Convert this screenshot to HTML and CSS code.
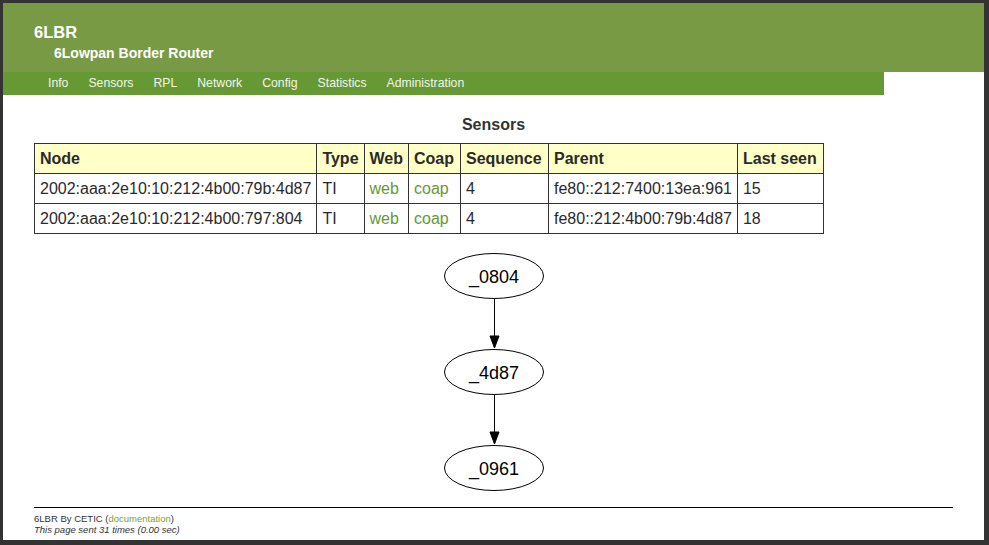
FILE: index.html
```html
<!DOCTYPE html>
<html>
<head>
<meta charset="utf-8">
<title>6LBR</title>
<link rel="stylesheet" href="styles.css">
</head>
<body>
<div class="page">
  <div class="banner">
    <div class="title">6LBR</div>
    <div class="subtitle">6Lowpan Border Router</div>
  </div>
  <div class="menu">
    <a href="#">Info</a>
    <a href="#">Sensors</a>
    <a href="#">RPL</a>
    <a href="#">Network</a>
    <a href="#">Config</a>
    <a href="#">Statistics</a>
    <a href="#">Administration</a>
  </div>
  <div class="content">
    <h2 class="heading">Sensors</h2>
    <table class="sensors">
      <tr>
        <th>Node</th><th>Type</th><th>Web</th><th class="col-coap">Coap</th><th class="col-seq">Sequence</th><th class="col-parent">Parent</th><th class="col-seen">Last seen</th>
      </tr>
      <tr>
        <td>2002:aaa:2e10:10:212:4b00:79b:4d87</td><td>TI</td><td><a href="#">web</a></td><td><a href="#">coap</a></td><td>4</td><td>fe80::212:7400:13ea:961</td><td>15</td>
      </tr>
      <tr>
        <td>2002:aaa:2e10:10:212:4b00:797:804</td><td>TI</td><td><a href="#">web</a></td><td><a href="#">coap</a></td><td>4</td><td>fe80::212:4b00:79b:4d87</td><td>18</td>
      </tr>
    </table>
    <svg class="graph" width="104" height="246" viewBox="0 0 104 246">
      <g fill="none" stroke="#000" stroke-width="1">
        <ellipse cx="52" cy="26" rx="49.5" ry="22.5"/>
        <ellipse cx="52" cy="122" rx="49.5" ry="22.5"/>
        <ellipse cx="52" cy="218" rx="49.5" ry="22.5"/>
        <line x1="52.5" y1="49" x2="52.5" y2="86"/>
        <line x1="52.5" y1="145" x2="52.5" y2="182"/>
      </g>
      <g fill="#000" stroke="#000" stroke-width="1">
        <polygon points="48,86 57,86 52.5,98"/>
        <polygon points="48,182 57,182 52.5,194"/>
      </g>
      <g font-family="'Liberation Sans', Arial, sans-serif" font-size="18" text-anchor="middle" fill="#000">
        <text x="52" y="32.5">_0804</text>
        <text x="52" y="128.5">_4d87</text>
        <text x="52" y="224.5">_0961</text>
      </g>
    </svg>
    <hr class="rule">
    <div class="footer">
      <div>6LBR By CETIC (<a href="#">documentation</a>)</div>
      <div class="sent">This page sent 31 times (0.00 sec)</div>
    </div>
  </div>
</div>
</body>
</html>
```

FILE: styles.css
```css
html, body {
  margin: 0;
  padding: 0;
}

body {
  background: #333333;
  font-family: "Liberation Sans", Arial, sans-serif;
  color: #333333;
}

.page {
  margin: 3px 5px 5px 3px;
  height: 537px;
  background: #ffffff;
  overflow: hidden;
  display: flex;
  flex-direction: column;
}

.banner {
  background: #789a45;
  height: 69px;
  box-sizing: border-box;
  padding: 20px 0 0 31px;
  color: #ffffff;
  font-weight: bold;
}

.title {
  font-size: 16.5px;
  line-height: 19px;
}

.subtitle {
  font-size: 14px;
  line-height: 17px;
  margin: 3px 0 0 20px;
}

.menu {
  background: #669933;
  height: 23px;
  margin-right: 100px;
  padding-left: 45px;
  display: flex;
  gap: 20px;
}

.menu a {
  color: #f4f4ec;
  text-decoration: none;
  font-size: 12.25px;
  line-height: 23px;
}

.content {
  padding: 0 31px;
}

.heading {
  margin: 21px 0 9px;
  font-size: 16px;
  line-height: 18px;
  text-align: center;
  font-weight: bold;
  color: #333333;
}

.sensors {
  border-collapse: collapse;
  border: 1px solid #333333;
  font-size: 16px;
  line-height: 19px;
}

.sensors th,
.sensors td {
  border: 1px solid #333333;
  padding: 5px;
  text-align: left;
  white-space: nowrap;
  color: #2a2a2a;
}

.sensors th {
  background: #ffffc8;
  font-weight: bold;
}

.sensors .col-coap {
  width: 41px;
}

.sensors .col-seq {
  width: 77px;
}

.sensors .col-parent {
  width: 177px;
}

.sensors .col-seen {
  width: 75px;
}

a {
  color: #669933;
  text-decoration: none;
}

.sensors td a {
  color: #669933;
}

.graph {
  display: block;
  margin: 16px auto 0;
}

.rule {
  margin: 11px 0 0;
  border: 0;
  border-top: 1px solid #000000;
  height: 0;
}

.footer {
  margin-top: 5px;
  font-size: 9.5px;
  line-height: 11px;
  color: #333333;
}

.footer a {
  color: #7aa33a;
}

.sent {
  font-style: italic;
}
```
